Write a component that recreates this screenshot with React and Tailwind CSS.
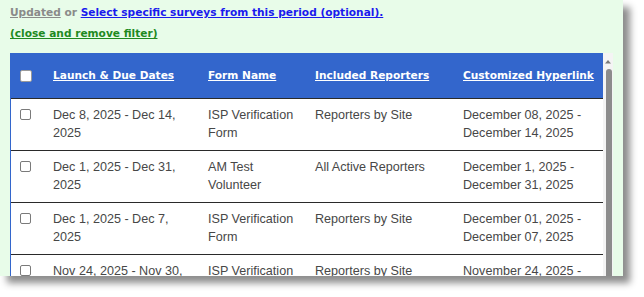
import React from 'react';

const rows = [
  {
    dates: ['Dec 8, 2025 - Dec 14,', '2025'],
    form: ['ISP Verification', 'Form'],
    reporters: 'Reporters by Site',
    link: ['December 08, 2025 -', 'December 14, 2025'],
  },
  {
    dates: ['Dec 1, 2025 - Dec 31,', '2025'],
    form: ['AM Test', 'Volunteer'],
    reporters: 'All Active Reporters',
    link: ['December 1, 2025 -', 'December 31, 2025'],
  },
  {
    dates: ['Dec 1, 2025 - Dec 7,', '2025'],
    form: ['ISP Verification', 'Form'],
    reporters: 'Reporters by Site',
    link: ['December 01, 2025 -', 'December 07, 2025'],
  },
  {
    dates: ['Nov 24, 2025 - Nov 30,', '2025'],
    form: ['ISP Verification', 'Form'],
    reporters: 'Reporters by Site',
    link: ['November 24, 2025 -', 'November 30, 2025'],
  },
];

function Lines({ lines }) {
  return lines.map((l, i) => (
    <div key={i} className="whitespace-nowrap">
      {l}
    </div>
  ));
}

export default function App() {
  return (
    <div className="min-h-screen bg-white">
      <div className="w-[623px] h-[276px] bg-[#e8fce9] shadow-[7px_7px_7px_rgba(0,0,0,0.45)] flex flex-col overflow-hidden">
        <div className="pl-[10px] pt-[4px] font-['DejaVu_Sans',Verdana,sans-serif] font-bold text-[10.6px] leading-[16px]">
          <div className="whitespace-nowrap">
            <span className="text-[#8a8a8a] underline">Updated</span>
            <span className="text-[#8a8a8a]"> or </span>
            <span className="text-[#1a1aee] underline">Select specific surveys from this period (optional).</span>
          </div>
          <div className="mt-[5px] text-[#1f8a1f] underline whitespace-nowrap">(close and remove filter)</div>
        </div>

        <div className="mt-[12px] ml-[10px] w-[603px] flex flex-1 min-h-0">
          <div className="w-[593px] flex flex-col overflow-hidden bg-white border-l border-[#3366cc]">
            <div className="h-[45px] shrink-0 bg-[#3366cc] grid grid-cols-[42px_155px_107px_148px_1fr] items-center text-white font-['DejaVu_Sans',Verdana,sans-serif] font-bold text-[10.6px]">
              <div className="pl-[9px] flex">
                <div className="w-[12px] h-[12px] rounded-[2px] bg-white border border-[#9a9a9a]" />
              </div>
              <div className="underline whitespace-nowrap">Launch &amp; Due Dates</div>
              <div className="underline whitespace-nowrap">Form Name</div>
              <div className="underline whitespace-nowrap">Included Reporters</div>
              <div className="underline whitespace-nowrap">Customized Hyperlink</div>
            </div>
            {rows.map((r, i) => (
              <div
                key={i}
                className="h-[52px] shrink-0 border-t border-[#2a2a2a] grid grid-cols-[42px_155px_107px_148px_1fr] pt-[7px] text-[#474747] font-['Liberation_Sans',Arial,sans-serif] text-[12.6px] leading-[18px]"
              >
                <div className="pl-[9px] pt-[3px]">
                  <div className="w-[11px] h-[11px] rounded-[2px] bg-white border border-[#7a7a7a]" />
                </div>
                <div>
                  <Lines lines={r.dates} />
                </div>
                <div>
                  <Lines lines={r.form} />
                </div>
                <div className="whitespace-nowrap">{r.reporters}</div>
                <div>
                  <Lines lines={r.link} />
                </div>
              </div>
            ))}
          </div>
          <div className="w-[10px] bg-[#f4f4f4] flex flex-col items-center">
            <svg width="8" height="6" viewBox="0 0 8 6" className="mt-[6px]">
              <path d="M4 1 L7 4.5 L1 4.5 Z" fill="#7a7a7a" />
            </svg>
            <div className="mt-[4px] ml-[2px] w-[6px] flex-1 rounded-t-[3px] bg-[#8c8c8c]" />
          </div>
        </div>
      </div>
    </div>
  );
}
